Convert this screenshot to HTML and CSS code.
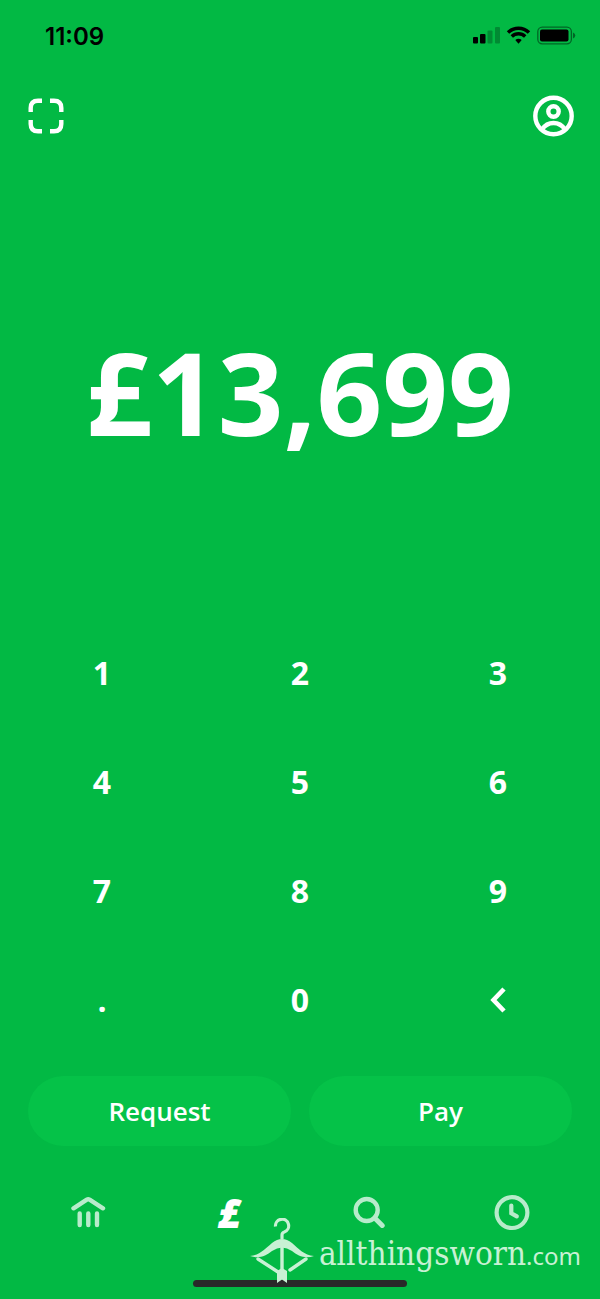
FILE: index.html
```html
<!DOCTYPE html>
<html lang="en">
<head>
  <meta charset="UTF-8">
  <meta name="viewport" content="width=device-width, initial-scale=1">
  <title>Pay</title>
  <link rel="stylesheet" href="styles.css">
</head>

<body>
  <div class="status-bar">
    <span class="time">11:09</span>
    <svg class="status-icons" width="104" height="20" viewBox="0 0 104 20" aria-hidden="true">
      <!-- signal -->
      <rect x="1" y="11" width="5" height="6.500" rx="1"/>
      <rect x="8" y="8" width="5.500" height="9.500" rx="1"/>
      <rect x="15.500" y="4.500" width="5" height="13" rx="1" opacity=".25"/>
      <rect x="23" y="1" width="5" height="16.500" rx="1" opacity=".25"/>
      <!-- wifi -->
      <g fill="none" stroke="#000" stroke-width="3.400">
        <path d="M36 6.500a15 15 0 0 1 21 0"/>
        <path d="M39.800 10.500a9.600 9.600 0 0 1 13.400 0"/>
      </g>
      <path d="M43.300 14q3.200-2.600 6.400 0l-3.200 3.700z"/>
      <!-- battery -->
      <rect x="65.800" y="1.200" width="33.600" height="16.600" rx="4.500" fill="none" stroke="#000" stroke-width="1.300" opacity=".45"/>
      <rect x="68" y="3.500" width="28.500" height="12" rx="2"/>
      <path d="M101 6.500q2.300 1 2.300 3t-2.300 3z" opacity=".45"/>
    </svg>
  </div>

  <header class="top">
    <button class="icon-btn" aria-label="Scan">
      <svg width="36" height="36" viewBox="0 0 36 36" fill="none" stroke="#fff" stroke-width="4.400">
        <path d="M2.700 14V10q0-7.300 7.300-7.300h4M22 2.700h4q7.300 0 7.300 7.300v4M33.300 22v4q0 7.300-7.300 7.300h-4M14 33.300h-4q-7.300 0-7.300-7.300v-4"/>
      </svg>
    </button>
    <button class="icon-btn" aria-label="Profile">
      <svg width="42" height="42" viewBox="0 0 42 42" fill="none" stroke="#fff" stroke-width="4.400">
        <circle cx="20.500" cy="21" r="18.200"/>
        <circle cx="20.500" cy="16.500" r="5.200"/>
        <path d="M9 34.500c3-4.500 7-6.500 11.500-6.500s8.500 2 11.500 6.500"/>
      </svg>
    </button>
  </header>

  <main>
    <div class="amount">£13,699</div>

    <div class="keypad">
      <button>1</button>
      <button>2</button>
      <button>3</button>
      <button>4</button>
      <button>5</button>
      <button>6</button>
      <button>7</button>
      <button>8</button>
      <button>9</button>
      <button>.</button>
      <button>0</button>
      <button aria-label="Delete">
        <svg width="16" height="26" viewBox="0 0 16 26" fill="none" stroke="#fff" stroke-width="4.600">
          <path d="M14 2L3.500 13 14 24"/>
        </svg>
      </button>
    </div>

    <div class="actions">
      <button>Request</button>
      <button>Pay</button>
    </div>
  </main>

  <nav class="tabs">
    <a href="#" aria-label="Banking">
      <svg width="36" height="36" viewBox="0 0 36 36" fill="none" stroke="#fff" stroke-width="4.400" stroke-linecap="round" stroke-linejoin="round">
        <path d="M2.500 13.300L15.800 4.600q1.400-.8 2.800 0L32 13.300M8.700 18.500v11.500M17.300 18.500v11.500M26 18.500v11.500"/>
      </svg>
    </a>
    <a href="#" class="active" aria-label="Pay">£</a>
    <a href="#" aria-label="Search">
      <svg width="36" height="36" viewBox="0 0 36 36" fill="none" stroke="#fff" stroke-width="4.400">
        <path d="M21.700 23l7.500 7.500" stroke-width="5" stroke-linecap="round"/>
        <circle cx="13.700" cy="15" r="11"/>
      </svg>
    </a>
    <a href="#" aria-label="Activity">
      <svg width="36" height="36" viewBox="0 0 36 36" fill="none" stroke="#fff" stroke-width="4.200">
        <circle cx="18" cy="17.600" r="15.400"/>
        <path d="M17.300 10.500v7.700l5.500 3.200" stroke-linecap="round"/>
      </svg>
    </a>
  </nav>

  <div class="home-bar"></div>

  <!-- watermark over the tabs -->
  <div class="watermark">
    <svg width="64" height="66" viewBox="0 0 64 66" aria-hidden="true">
      <path d="M25.500 8.500a6.600 6.600 0 1 1 8.800 5.500q-2.300.7-2.300 3v4" fill="none" stroke="#c8f1d4" stroke-width="3.200"/>
      <path d="M0 38c10-1 15-7 22-13q10-8 20 0c7 6 12 12 22 13-9 3-16 0-22-5q-10-7-20 0c-6 5-13 8-22 5z" fill="#c8f1d4"/>
      <path d="M32 29v24M8 41l20 13M56 41L40 52" fill="none" stroke="#c8f1d4" stroke-width="3.400" stroke-linecap="round"/>
      <path d="M27 53l5-3 5 3v12l-5-3.500-5 3.500z" fill="#c8f1d4"/>
    </svg>
    <div class="wordmark">
      <span class="brand">allthingsworn</span><span class="domain">.com</span>
    </div>
  </div>
</body>

</html>
```
FILE: styles.css
```css
* {
  box-sizing: border-box;
}
body {
  position: relative;
  display: flex;
  flex-direction: column;
  min-height: 100vh;
  margin: 0;
  background-color: #02b944;
  color: #fff;
  font-family: "Open Sans", sans-serif;
  font-weight: 600;
}
button {
  padding: 0;
  border: none;
  background: none;
  color: inherit;
  font: inherit;
  cursor: pointer;
}
svg {
  display: block;
}
.status-bar {
  display: flex;
  justify-content: space-between;
  align-items: center;
  height: 72px;
  padding: 0 24px 0 45px;
  color: #000;
}
.time {
  font-family: Inter, sans-serif;
  font-size: 24px;
}
.top {
  display: flex;
  justify-content: space-between;
  align-items: center;
  height: 88px;
  padding: 0 25px 0 28px;
}
main {
  display: flex;
  flex: 1;
  flex-direction: column;
}
.amount {
  display: flex;
  flex: 1;
  justify-content: center;
  align-items: center;
  padding-top: 4px;
  font-size: 115px;
  font-weight: bold;
}
.keypad {
  display: grid;
  grid-template-columns: repeat(3, 1fr);
  grid-auto-rows: 109px;
  padding: 0 3px;
  font-size: 32px;
  font-weight: bold;
}
.keypad button {
  display: flex;
  justify-content: center;
  align-items: center;
}
.actions {
  display: flex;
  gap: 18px;
  padding: 22px 28px 0;
  font-size: 26px;
}
.actions button {
  flex: 1;
  height: 70px;
  border-radius: 35px;
  background-color: #05c248;
}
.tabs {
  display: grid;
  grid-template-columns: repeat(4, 1fr);
  align-items: center;
  height: 134px;
  padding: 0 18px;
}
.tabs a {
  display: flex;
  justify-content: center;
  align-items: center;
  color: #fff;
  text-decoration: none;
}
.tabs svg {
  opacity: .72;
}
.tabs .active {
  font-size: 40px;
  font-style: italic;
  font-weight: 800;
  line-height: 36px;
}
.home-bar {
  width: 214px;
  height: 7px;
  margin: 0 auto 12px;
  border-radius: 4px;
  background-color: #292929;
}
.watermark {
  position: absolute;
  right: 19px;
  bottom: 15px;
  display: flex;
  align-items: center;
  gap: 5px;
  color: #c8f1d4;
  font-weight: normal;
}
.wordmark {
  padding-top: 5px;
}
.brand {
  font-family: "DejaVu Serif Condensed", "DejaVu Serif", serif;
  font-size: 33px;
}
.domain {
  font-family: "Noto Sans", sans-serif;
  font-size: 24px;
}
```
